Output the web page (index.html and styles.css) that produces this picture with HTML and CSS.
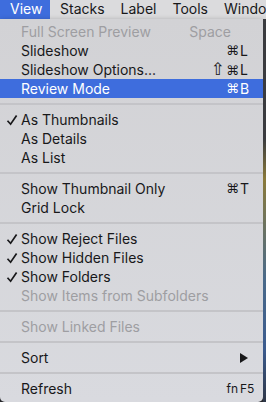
FILE: index.html
```html
<!DOCTYPE html>
<html lang="en">

<head>
    <meta charset="UTF-8">
    <meta name="viewport" content="width=device-width, initial-scale=1.0">
    <title>View Menu</title>
    <link rel="stylesheet" href="styles.css">
</head>

<body>

    <div class="menubar">
        <span class="menubar-item active">View</span>
        <span class="menubar-item">Stacks</span>
        <span class="menubar-item">Label</span>
        <span class="menubar-item">Tools</span>
        <span class="menubar-item">Window</span>
    </div>

    <div class="screen">
        <div class="menu">
            <div class="item disabled">
                <span class="check"></span>
                <span class="label">Full Screen Preview</span>
                <span class="mods">Space</span><span class="key"></span>
            </div>
            <div class="item">
                <span class="check"></span>
                <span class="label">Slideshow</span>
                <span class="mods">⌘</span><span class="key">L</span>
            </div>
            <div class="item">
                <span class="check"></span>
                <span class="label">Slideshow Options...</span>
                <span class="mods"><span class="shift">⇧</span>⌘</span><span class="key">L</span>
            </div>
            <div class="item selected">
                <span class="check"></span>
                <span class="label">Review Mode</span>
                <span class="mods">⌘</span><span class="key">B</span>
            </div>

            <div class="separator"></div>

            <div class="item">
                <span class="check"><svg viewBox="0 0 12 12"><path d="M1.5 6.8 L4.6 10.2 L10.6 1.6" /></svg></span>
                <span class="label">As Thumbnails</span>
            </div>
            <div class="item">
                <span class="check"></span>
                <span class="label">As Details</span>
            </div>
            <div class="item">
                <span class="check"></span>
                <span class="label">As List</span>
            </div>

            <div class="separator"></div>

            <div class="item">
                <span class="check"></span>
                <span class="label">Show Thumbnail Only</span>
                <span class="mods">⌘</span><span class="key">T</span>
            </div>
            <div class="item">
                <span class="check"></span>
                <span class="label">Grid Lock</span>
            </div>

            <div class="separator"></div>

            <div class="item">
                <span class="check"><svg viewBox="0 0 12 12"><path d="M1.5 6.8 L4.6 10.2 L10.6 1.6" /></svg></span>
                <span class="label">Show Reject Files</span>
            </div>
            <div class="item">
                <span class="check"><svg viewBox="0 0 12 12"><path d="M1.5 6.8 L4.6 10.2 L10.6 1.6" /></svg></span>
                <span class="label">Show Hidden Files</span>
            </div>
            <div class="item">
                <span class="check"><svg viewBox="0 0 12 12"><path d="M1.5 6.8 L4.6 10.2 L10.6 1.6" /></svg></span>
                <span class="label">Show Folders</span>
            </div>
            <div class="item disabled">
                <span class="check"></span>
                <span class="label">Show Items from Subfolders</span>
            </div>

            <div class="separator"></div>

            <div class="item disabled">
                <span class="check"></span>
                <span class="label">Show Linked Files</span>
            </div>

            <div class="separator"></div>

            <div class="item">
                <span class="check"></span>
                <span class="label">Sort</span>
                <span class="arrow"><svg viewBox="0 0 8 10"><path d="M0 0 L8 5 L0 10 Z" /></svg></span>
            </div>

            <div class="separator"></div>

            <div class="item">
                <span class="check"></span>
                <span class="label">Refresh</span>
                <span class="mods fn">fn</span><span class="key fn">F5</span>
            </div>
        </div>
        <div class="backdrop"></div>
    </div>

</body>

</html>
```

FILE: styles.css
```css
:root {
    --ui-font: "Inter", "Noto Sans", "DejaVu Sans", sans-serif;
    --menubar-bg: rgb(219, 219, 221);
    --menu-bg: rgb(214, 215, 219);
    --text: rgb(24, 24, 26);
    --disabled: rgb(158, 158, 162);
    --highlight: rgb(62, 109, 221);
    --sep: rgb(196, 196, 200);
}

* {
    margin: 0;
    padding: 0;
    box-sizing: border-box;
}

body {
    width: 266px;
    height: 402px;
    overflow: hidden;
    background-color: #2e2f33;
    font-family: var(--ui-font);
    font-size: 14px;
    color: var(--text);
}

.menubar {
    display: flex;
    height: 19px;
    background-color: var(--menubar-bg);
    white-space: nowrap;
    overflow: hidden;
}

.menubar-item {
    flex-shrink: 0;
    padding: 0 8px;
    line-height: 18px;
}

.menubar-item.active {
    background-color: var(--highlight);
    color: white;
    width: 50px;
    padding: 0 0 0 10px;
    margin-right: 2px;
}

.screen {
    display: flex;
}

.menu {
    width: 263px;
    height: 383px;
    padding-top: 3px;
    background: linear-gradient(to bottom, rgb(210, 210, 213), rgb(217, 218, 223));
    border-radius: 0 0 5px 5px;
    box-shadow: 0 2px 6px rgba(0, 0, 0, 0.35);
}

.backdrop {
    flex: 1;
    background: linear-gradient(to bottom, #3a3b3f 0, #3a3b3f 120px, #8a7a3a 160px, #4a6a8a 260px, #3b5b8e 330px, #2a2a2e 402px);
}

.item {
    display: flex;
    align-items: center;
    height: 19px;
    padding: 0 12px 0 6px;
    white-space: nowrap;
}

.item.disabled {
    color: var(--disabled);
}

.item.selected {
    background-color: var(--highlight);
    color: white;
}

.check {
    width: 15px;
    height: 12px;
    display: flex;
    align-items: center;
}

.check svg {
    width: 12px;
    height: 12px;
    fill: none;
    stroke: var(--text);
    stroke-width: 1.7;
}

.label {
    flex: 1;
}

.mods {
    font-family: "DejaVu Sans", sans-serif;
    font-size: 13px;
    text-align: right;
}

.shift {
    font-size: 17px;
    line-height: 14px;
    margin-right: 1px;
}

.item.disabled .mods {
    font-family: var(--ui-font);
    font-size: 14px;
    margin-right: 8px;
}

.key {
    width: 11px;
    margin-left: 1px;
    text-align: left;
}

.mods.fn {
    font-family: var(--ui-font);
    font-size: 12px;
}

.key.fn {
    width: 13px;
    font-size: 12px;
    margin-left: 2px;
    margin-right: -2px;
}

.arrow {
    width: 10px;
    margin-right: 1px;
    display: flex;
}

.arrow svg {
    width: 8px;
    height: 10px;
    fill: var(--text);
}

.separator {
    height: 2px;
    margin: 5px 0;
    background-color: var(--sep);
}
```
